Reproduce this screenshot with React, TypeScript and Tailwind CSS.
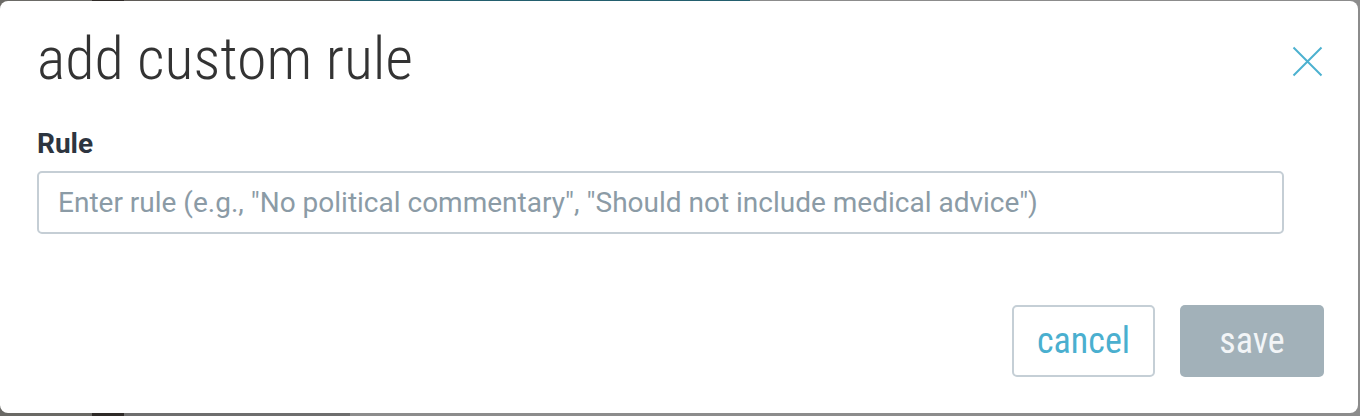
import React from "react";

export default function App() {
  return (
    <div className="relative h-[416px] w-[1360px] overflow-hidden bg-[#8c8c8c]">
      {/* backdrop page strips */}
      <div className="absolute inset-x-0 top-0 flex h-[6px]">
        <div className="w-[92px] bg-[#6b6a66]" />
        <div className="w-[32px] bg-[#2f2b28]" />
        <div className="w-[226px] bg-[#5f5b57]" />
        <div className="w-[400px] bg-[#235f6e]" />
        <div className="flex-1 bg-[#8c8c8c]" />
      </div>
      <div className="absolute inset-x-0 bottom-0 flex h-[10px]">
        <div className="w-[92px] bg-[#6a6965]" />
        <div className="w-[32px] bg-[#2e2a27]" />
        <div className="w-[226px] bg-[#6e6e6e]" />
        <div className="flex-1 bg-[#8c8c8c]" />
      </div>
      <div
        className="relative mt-[1px] flex h-[412px] w-[1358px] flex-col rounded-[8px] bg-white pl-[37px] pr-[34px]"
        style={{ fontFamily: "Roboto, 'Noto Sans', sans-serif" }}
      >
        <div className="flex h-[94px] items-start justify-between">
          <h1
            className="mt-[22px] text-[60px] leading-[72px] font-light text-[#333333]"
            style={{ fontStretch: "condensed" }}
          >
            add custom rule
          </h1>
          <button className="mt-[45px] mr-[1px] flex h-[31px] w-[31px] items-center justify-center">
            <svg width="31" height="31" viewBox="0 0 31 31" fill="none">
              <path d="M1.5 1.5 L29.5 29.5 M29.5 1.5 L1.5 29.5" stroke="#4cb1d0" strokeWidth="2" />
            </svg>
          </button>
        </div>
        <label className="mt-[32px] text-[28px] leading-[34px] font-bold text-[#2d3540]">Rule</label>
        <div className="mt-[10px] mr-[40px] flex h-[63px] items-center rounded-[5px] border-2 border-[#c5ced5] px-[19px]">
          <span className="text-[28px] text-[#8b9ba6]">
            Enter rule (e.g., "No political commentary", "Should not include medical advice")
          </span>
        </div>
        <div className="mt-[71px] flex justify-end gap-[25px]">
          <button
            className="flex h-[72px] w-[143px] items-center justify-center rounded-[5px] border-2 border-[#c5cfd6] text-[36px] text-[#4aafcf]"
            style={{ fontStretch: "condensed" }}
          >
            cancel
          </button>
          <button
            className="flex h-[72px] w-[144px] items-center justify-center rounded-[5px] bg-[#a2b1b9] text-[36px] text-[#f2f5f7]"
            style={{ fontStretch: "condensed" }}
          >
            save
          </button>
        </div>
      </div>
    </div>
  );
}
